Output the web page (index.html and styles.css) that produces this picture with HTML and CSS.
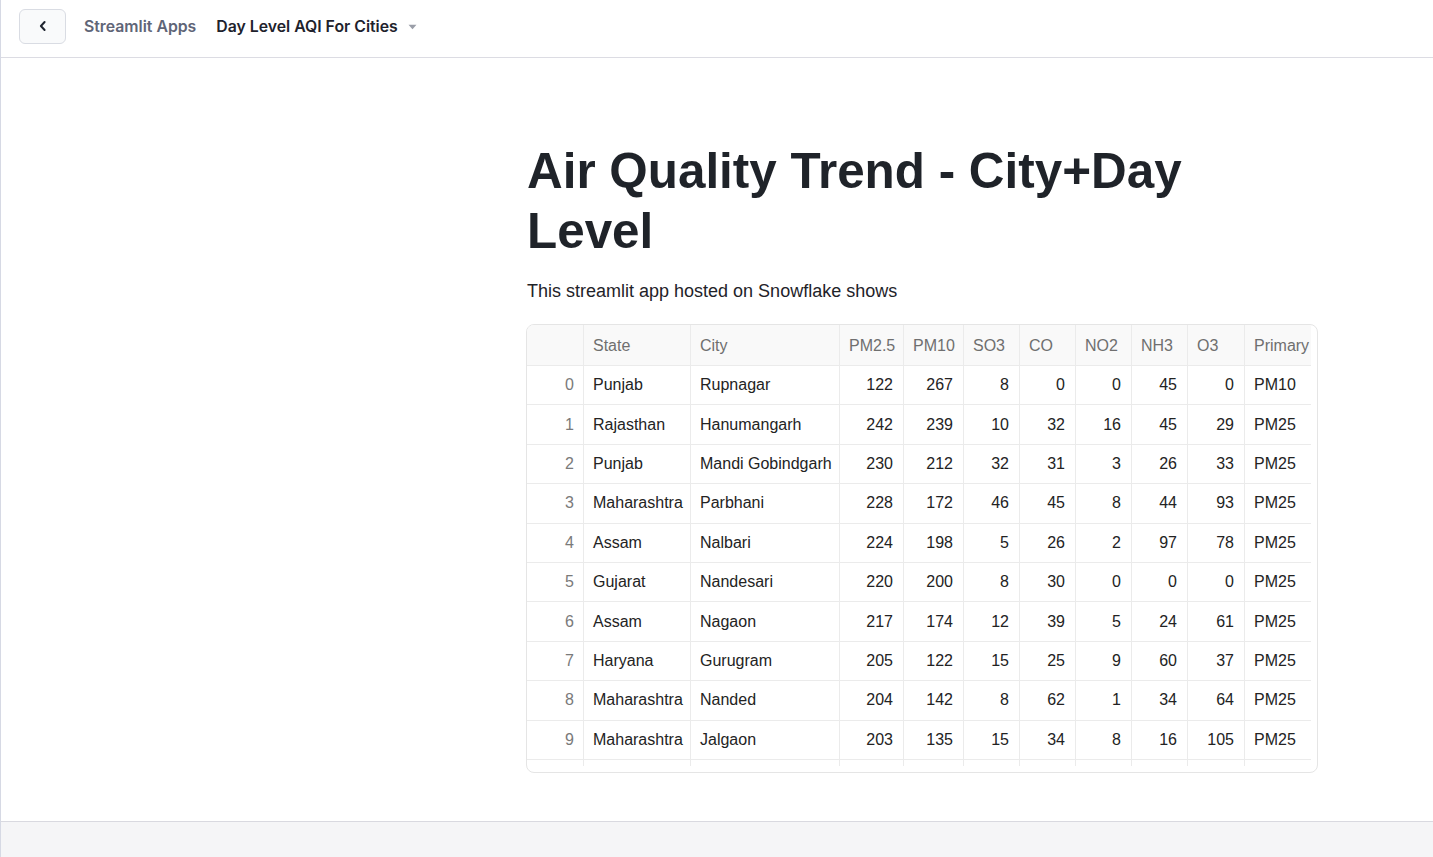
FILE: index.html
```html
<!DOCTYPE html>
<html lang="en">
<head>
<meta charset="utf-8">
<title>Day Level AQI For Cities</title>
<link rel="stylesheet" href="styles.css">
</head>
<body>
<div class="app">
  <header class="topbar">
    <button class="back" aria-label="Back">
      <svg width="14" height="14" viewBox="0 0 14 14"><path d="M8.6 3 4.9 7l3.7 4" fill="none" stroke="#1f2430" stroke-width="2" stroke-linecap="round" stroke-linejoin="round"/></svg>
    </button>
    <span class="crumb">Streamlit Apps</span>
    <span class="current">Day Level AQI For Cities</span>
    <svg class="caret" width="9" height="6" viewBox="0 0 9 6"><path d="M0.5 0.8h8L4.5 5.2z" fill="#9a9ea8"/></svg>
  </header>
  <main class="main">
    <h1 class="title">Air Quality Trend - City+Day Level</h1>
    <p class="lead">This streamlit app hosted on Snowflake shows</p>
    <div class="frame">
      <div class="scroller">
        <table class="grid">
          <colgroup>
            <col class="c57"><col class="c107"><col class="c149"><col class="c64"><col class="c60"><col class="c56"><col class="c56"><col class="c56"><col class="c56"><col class="c57"><col class="c66">
          </colgroup>
          <thead>
            <tr><th></th><th>State</th><th>City</th><th>PM2.5</th><th>PM10</th><th>SO3</th><th>CO</th><th>NO2</th><th>NH3</th><th>O3</th><th class="last">Primary</th></tr>
          </thead>
          <tbody>
            <tr><td class="idx">0</td><td>Punjab</td><td>Rupnagar</td><td class="n">122</td><td class="n">267</td><td class="n">8</td><td class="n">0</td><td class="n">0</td><td class="n">45</td><td class="n">0</td><td class="last">PM10</td></tr>
            <tr><td class="idx">1</td><td>Rajasthan</td><td>Hanumangarh</td><td class="n">242</td><td class="n">239</td><td class="n">10</td><td class="n">32</td><td class="n">16</td><td class="n">45</td><td class="n">29</td><td class="last">PM25</td></tr>
            <tr><td class="idx">2</td><td>Punjab</td><td>Mandi Gobindgarh</td><td class="n">230</td><td class="n">212</td><td class="n">32</td><td class="n">31</td><td class="n">3</td><td class="n">26</td><td class="n">33</td><td class="last">PM25</td></tr>
            <tr><td class="idx">3</td><td>Maharashtra</td><td>Parbhani</td><td class="n">228</td><td class="n">172</td><td class="n">46</td><td class="n">45</td><td class="n">8</td><td class="n">44</td><td class="n">93</td><td class="last">PM25</td></tr>
            <tr><td class="idx">4</td><td>Assam</td><td>Nalbari</td><td class="n">224</td><td class="n">198</td><td class="n">5</td><td class="n">26</td><td class="n">2</td><td class="n">97</td><td class="n">78</td><td class="last">PM25</td></tr>
            <tr><td class="idx">5</td><td>Gujarat</td><td>Nandesari</td><td class="n">220</td><td class="n">200</td><td class="n">8</td><td class="n">30</td><td class="n">0</td><td class="n">0</td><td class="n">0</td><td class="last">PM25</td></tr>
            <tr><td class="idx">6</td><td>Assam</td><td>Nagaon</td><td class="n">217</td><td class="n">174</td><td class="n">12</td><td class="n">39</td><td class="n">5</td><td class="n">24</td><td class="n">61</td><td class="last">PM25</td></tr>
            <tr><td class="idx">7</td><td>Haryana</td><td>Gurugram</td><td class="n">205</td><td class="n">122</td><td class="n">15</td><td class="n">25</td><td class="n">9</td><td class="n">60</td><td class="n">37</td><td class="last">PM25</td></tr>
            <tr><td class="idx">8</td><td>Maharashtra</td><td>Nanded</td><td class="n">204</td><td class="n">142</td><td class="n">8</td><td class="n">62</td><td class="n">1</td><td class="n">34</td><td class="n">64</td><td class="last">PM25</td></tr>
            <tr><td class="idx">9</td><td>Maharashtra</td><td>Jalgaon</td><td class="n">203</td><td class="n">135</td><td class="n">15</td><td class="n">34</td><td class="n">8</td><td class="n">16</td><td class="n">105</td><td class="last">PM25</td></tr>
            <tr><td class="idx"></td><td></td><td></td><td class="n"></td><td class="n"></td><td class="n"></td><td class="n"></td><td class="n"></td><td class="n"></td><td class="n"></td><td class="last"></td></tr>
          </tbody>
        </table>
      </div>
    </div>
  </main>
  <footer class="footer"></footer>
</div>
</body>
</html>
```

FILE: styles.css
```css
html, body {
  margin: 0;
  padding: 0;
  background: #ffffff;
}

body {
  font-family: "Liberation Sans", Arial, sans-serif;
  color: #1f2329;
}

.app {
  min-height: 100vh;
  display: flex;
  flex-direction: column;
  border-left: 1px solid #d6d9e4;
  box-sizing: border-box;
}

.topbar {
  height: 58px;
  box-sizing: border-box;
  border-bottom: 1px solid #dcdce3;
  display: flex;
  align-items: center;
  padding: 0 0 5px 18px;
  font-family: Inter, "Noto Sans", sans-serif;
  font-size: 15.8px;
  font-weight: 600;
}

.back {
  width: 47px;
  height: 35px;
  box-sizing: border-box;
  border: 1px solid #d9dce3;
  border-radius: 6px;
  background: #f9fafb;
  display: flex;
  align-items: center;
  justify-content: center;
  padding: 0;
  margin-right: 18px;
}

.crumb {
  color: #5f6577;
  margin-right: 20px;
}

.current {
  color: #1e222c;
  margin-right: 10px;
}

.caret {
  display: block;
  margin-top: 1px;
}

.main {
  flex: 1;
  padding: 83px 0 0 526px;
}

.title {
  margin: 0;
  font-size: 49.4px;
  line-height: 60px;
  font-weight: 700;
  color: #1f2329;
  width: 700px;
}

.lead {
  margin: 17px 0 19px;
  font-size: 18px;
  line-height: 27px;
  color: #1f2329;
}

.frame {
  margin-left: -1px;
  width: 792px;
  height: 449px;
  box-sizing: border-box;
  border: 1px solid #e5e5e5;
  border-radius: 8px;
  overflow: hidden;
  padding: 0 7px 7px 0;
}

.scroller {
  width: 784px;
  height: 441px;
  overflow: hidden;
}

.grid {
  table-layout: fixed;
  border-collapse: separate;
  border-spacing: 0;
  width: 784px;
  font-size: 16px;
  color: #232323;
}

.c56 { width: 56px; }
.c57 { width: 57px; }
.c60 { width: 60px; }
.c64 { width: 64px; }
.c66 { width: 66px; }
.c107 { width: 107px; }
.c149 { width: 149px; }

.grid th,
.grid td {
  box-sizing: border-box;
  padding: 0 9px;
  border-right: 1px solid #ebebeb;
  border-bottom: 1px solid #ebebeb;
  white-space: nowrap;
  overflow: hidden;
}

.grid th {
  height: 41px;
  padding-top: 2px;
  background: #f9f9f9;
  color: #6f6f6f;
  font-weight: 400;
  text-align: left;
}

.grid td {
  height: 39.4px;
}

.grid .last {
  border-right: none;
}

.grid .n {
  text-align: right;
  padding-right: 10px;
}

.grid .idx {
  text-align: right;
  padding-right: 9px;
  color: #7a7a7a;
}

.footer {
  height: 36px;
  box-sizing: border-box;
  border-top: 1px solid #d9d9e0;
  background: #f5f5f7;
}
```
